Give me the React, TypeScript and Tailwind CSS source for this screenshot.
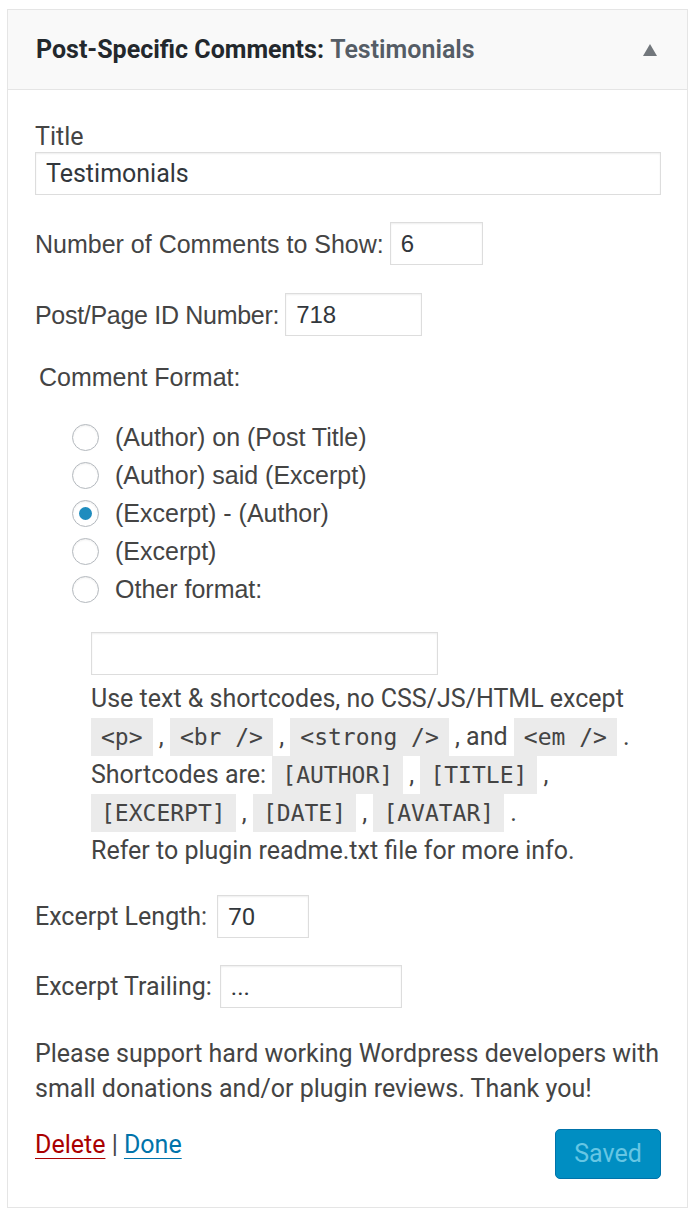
import React from "react";

const lib = { fontFamily: '"Liberation Sans", Arial, sans-serif' };
const rob = { fontFamily: 'Roboto, "Liberation Sans", sans-serif' };

function Radio({ checked, label }: { checked?: boolean; label: string }) {
  return (
    <div className="flex items-center h-[38px]">
      <span className="w-[27px] h-[27px] rounded-full border border-[#b4b9be] bg-white shadow-[inset_0_1px_2px_rgba(0,0,0,0.07)] flex items-center justify-center shrink-0">
        {checked && <span className="w-[13px] h-[13px] rounded-full bg-[#1e8cbe]" />}
      </span>
      <span className="ml-[16px]">{label}</span>
    </div>
  );
}

function Code({ children }: { children: React.ReactNode }) {
  return (
    <code
      className="bg-[#ebebeb] px-[10px] py-[6px] text-[23px] text-[#444]"
      style={{ fontFamily: '"DejaVu Sans Mono", "Liberation Mono", monospace' }}
    >
      {children}
    </code>
  );
}

const inputCls =
  "border border-[#dddddd] bg-white shadow-[inset_0_1px_2px_rgba(0,0,0,0.07)] h-[43px] px-[10px] text-[24px] text-[#32373c] outline-none";

export default function App() {
  return (
    <div className="bg-white w-[696px] h-[1216px] pt-[9px] pl-[7px]" style={rob}>
      <div className="w-[681px] h-[1199px] border border-[#e5e5e5] flex flex-col text-[#444] text-[25px]">
        <div className="h-[80px] bg-[#f9f9f9] border-b border-[#e5e5e5] flex items-center justify-between pl-[28px] pr-[30px] shrink-0">
          <div className="text-[25px] font-bold text-[#23282d] leading-none" style={rob}>
            Post-Specific Comments<span>:</span>{" "}
            <span className="text-[#555d66] font-semibold">Testimonials</span>
          </div>
          <svg width="14" height="12" viewBox="0 0 14 12">
            <path d="M7 0 L14 12 L0 12 Z" fill="#72777c" />
          </svg>
        </div>

        <div className="pl-[27px] pr-[26px] flex flex-col">
          <div className="mt-[34px] leading-[26px]" style={rob}>Title</div>
          <input className={inputCls + " w-full mt-[2px] text-[25px]"} style={rob} defaultValue="Testimonials" readOnly />

          <div className="mt-[27px] flex items-center" style={lib}>
            <span className="leading-[30px]">Number of Comments to Show:</span>
            <input className={inputCls + " w-[93px] ml-[6px]"} style={lib} defaultValue="6" readOnly />
          </div>

          <div className="mt-[28px] flex items-center" style={lib}>
            <span className="leading-[30px] tracking-[-0.3px]">Post/Page ID Number:</span>
            <input className={inputCls + " w-[137px] ml-[6px]"} style={lib} defaultValue="718" readOnly />
          </div>

          <div className="mt-[28px] ml-[4px] leading-[26px]" style={lib}>Comment Format:</div>

          <div className="mt-[28px] ml-[37px] flex flex-col leading-[30px]" style={lib}>
            <Radio label="(Author) on (Post Title)" />
            <Radio label="(Author) said (Excerpt)" />
            <Radio checked label="(Excerpt) - (Author)" />
            <Radio label="(Excerpt)" />
            <Radio label="Other format:" />
          </div>

          <div className="ml-[56px] mt-[24px] flex flex-col" style={rob}>
            <input className={inputCls + " w-[347px]"} defaultValue="" readOnly />
            <div className="mt-[5px] leading-[38px] whitespace-nowrap">
              <div>Use text &amp; shortcodes, no CSS/JS/HTML except</div>
              <div>
                <Code>&lt;p&gt;</Code> , <Code>&lt;br /&gt;</Code> , <Code>&lt;strong /&gt;</Code> , and <Code>&lt;em /&gt;</Code> .
              </div>
              <div>
                Shortcodes are: <Code>[AUTHOR]</Code> , <Code>[TITLE]</Code> ,
              </div>
              <div>
                <Code>[EXCERPT]</Code> , <Code>[DATE]</Code> , <Code>[AVATAR]</Code> .
              </div>
              <div>Refer to plugin readme.txt file for more info.</div>
            </div>
          </div>

          <div className="mt-[25px] flex items-center" style={rob}>
            <span className="leading-[30px]">Excerpt Length:</span>
            <input className={inputCls + " w-[92px] ml-[10px]"} style={rob} defaultValue="70" readOnly />
          </div>

          <div className="mt-[27px] flex items-center" style={rob}>
            <span className="leading-[30px]">Excerpt Trailing:</span>
            <input className={inputCls + " w-[182px] ml-[8px]"} style={rob} defaultValue="..." readOnly />
          </div>

          <div className="mt-[28px] leading-[35px]" style={rob}>
            Please support hard working Wordpress developers with small donations and/or plugin reviews. Thank you!
          </div>

          <div className="mt-[23px] flex justify-between items-start" style={rob}>
            <div className="leading-[30px] mt-[1px]">
              <a className="text-[#a00] underline underline-offset-[5px] decoration-[1px]">Delete</a>
              <span className="text-[#444]"> | </span>
              <a className="text-[#0073aa] underline underline-offset-[5px] decoration-[1px]">Done</a>
            </div>
            <button className="w-[106px] h-[50px] rounded-[5px] bg-[#008ec2] text-[#66c6e4] text-[25px] border border-[#0073aa]">
              Saved
            </button>
          </div>
        </div>
      </div>
    </div>
  );
}
